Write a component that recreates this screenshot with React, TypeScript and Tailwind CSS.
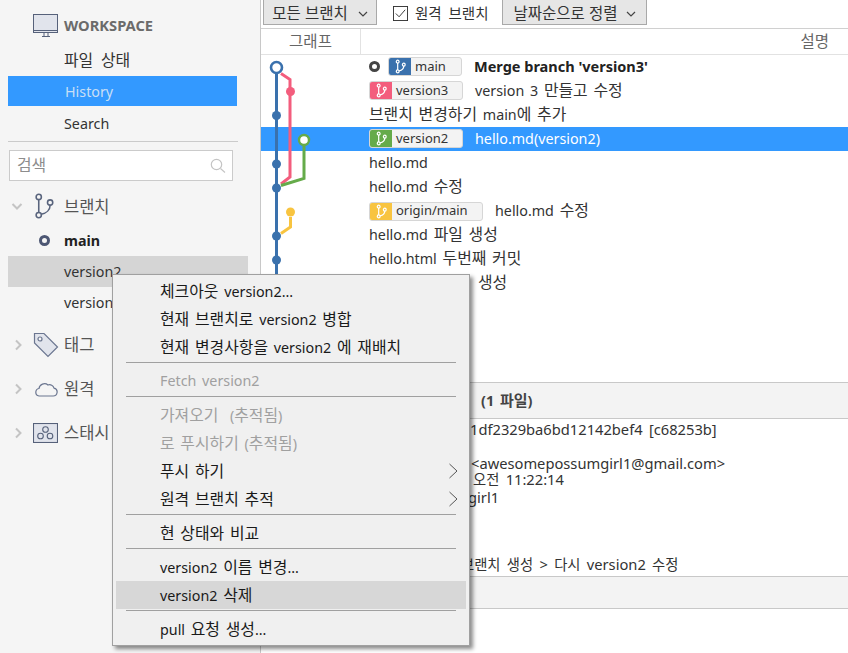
import React from 'react';

const FONT = "font-['Noto_Sans','Noto_Sans_CJK_KR',sans-serif]";

// Hangul runs are set a little larger, the UI font has wider Korean glyphs than Noto
const K = ({ children, size = 'text-[15.9px]' }: { children: string; size?: string }) => (
  <span>
    {children.split(/([\uAC00-\uD7A3]+)/).map((part, idx) =>
      idx % 2 === 1 ? (
        <span key={idx} className={size}>{part}</span>
      ) : (
        <React.Fragment key={idx}>{part}</React.Fragment>
      )
    )}
  </span>
);

const BranchGlyph = ({ className = '', strokeWidth = 1.3 }: { className?: string; strokeWidth?: number }) => (
  <svg viewBox="0 0 16 16" className={className} fill="none" stroke="currentColor" strokeWidth={strokeWidth}>
    <circle cx="5" cy="2.8" r="1.5" />
    <circle cx="5" cy="13.2" r="1.5" />
    <circle cx="11.5" cy="6" r="1.5" />
    <path d="M5 4.3v7.4M6.4 12.7c3-.6 5.1-2.6 5.1-5.2" />
  </svg>
);

const BranchTag = ({ name, color, width }: { name: string; color: string; width: string }) => (
  <span className={`flex h-[19px] items-center overflow-hidden rounded-[3px] border border-[#d6d6d6] bg-[#f3f3f3] ${width}`}>
    <span className={`flex h-full w-[22px] shrink-0 items-center justify-center text-white ${color}`}>
      <BranchGlyph className="h-[15px] w-[15px]" />
    </span>
    <span className="pl-[4px] text-[13px] text-[#333] [word-spacing:0]">{name}</span>
  </span>
);

const CommitGraph = () => (
  <svg className="absolute left-0 top-0 z-10" width="120" height="260" viewBox="261 54 120 260" fill="none">
    <path d="M276.5 72V290" stroke="#3a71ad" strokeWidth="3" />
    <path d="M281 72.5L290 78.5V176L281 183" stroke="#f35d7d" strokeWidth="3" />
    <path d="M304 145V177.5L281 184.5" stroke="#65ab4a" strokeWidth="3" />
    <path d="M290.5 216V226L281 232.5" stroke="#f8c440" strokeWidth="3" />
    <circle cx="276.5" cy="66.5" r="5.5" fill="#fff" stroke="#3a71ad" strokeWidth="2.6" />
    <circle cx="290.5" cy="90.5" r="4.5" fill="#f35d7d" />
    <circle cx="276.5" cy="114.5" r="4.5" fill="#3a71ad" />
    <circle cx="304" cy="139" r="5" fill="#fff" stroke="#65ab4a" strokeWidth="2.4" />
    <circle cx="276.5" cy="163" r="4.5" fill="#3a71ad" />
    <circle cx="276.5" cy="187" r="4.5" fill="#3a71ad" />
    <circle cx="290.5" cy="211" r="4.5" fill="#f8c440" />
    <circle cx="276.5" cy="235" r="4.5" fill="#3a71ad" />
    <circle cx="276.5" cy="259" r="4.5" fill="#3a71ad" />
  </svg>
);

const Row = ({ children, selected = false }: { children: React.ReactNode; selected?: boolean }) => (
  <div className={`flex h-[24.1px] items-center pb-[1px] pl-[108px] text-[14.3px] ${selected ? 'bg-[#3399ff] text-white' : 'text-[#333]'}`}>
    {children}
  </div>
);

const Chevron = ({ open = false }: { open?: boolean }) => (
  <svg viewBox="0 0 12 12" className="h-3 w-3" fill="none" stroke="#c4c4c4" strokeWidth="2">
    <path d={open ? 'M1.5 4l4.5 4.5L10.5 4' : 'M4 1.5L8.5 6 4 10.5'} />
  </svg>
);

const Sidebar = () => (
  <aside className="flex w-[261px] shrink-0 flex-col border-r border-[#c8c8c8] bg-[#f5f5f5] pl-2 text-[14.3px] text-[#333]">
    <div className="flex h-[46px] items-center pt-[4px] pl-[25px]">
      <svg viewBox="0 0 26 23" className="h-[23px] w-[26px]" fill="none">
        <rect x="0.5" y="0.5" width="24" height="18" fill="#e1e4ec" stroke="#56617a" />
        <path d="M0 16.5h25M9 22.5h8M11 19v3M15 19v3" stroke="#56617a" />
      </svg>
      <span className="ml-[5px] text-[14.7px] font-bold text-[#6b6b6b]">WORKSPACE</span>
    </div>
    <div className="flex h-[30px] items-center pl-[56px] [word-spacing:4px]"><K>파일 상태</K></div>
    <div className="flex h-[30px] w-[229px] items-center bg-[#3399ff] pl-[57px] pt-[2px] text-[#c9dff5]">History</div>
    <div className="flex h-[33px] items-center pl-[56px] pt-[2px]">Search</div>
    <div className="mt-[2px] h-px w-[230px] bg-[#cbcbcb]" />
    <div className="ml-px mt-[8px] flex h-[31px] w-[224px] items-center justify-between border border-[#cbcbcb] bg-white pl-[7px] pr-[6px] text-[#8d8d8d]">
      <K>검색</K>
      <svg viewBox="0 0 16 16" className="h-4 w-4" fill="none" stroke="#c4c4c4" strokeWidth="1.2">
        <circle cx="6.5" cy="6.5" r="5.2" />
        <path d="M10.5 10.5l4.5 4" />
      </svg>
    </div>
    <div className="mt-[8px] flex h-[34px] items-center pl-[3px]">
      <Chevron open />
      <BranchGlyph className="ml-[7px] h-[28px] w-[28px] text-[#59647d]" strokeWidth={0.9} />
      <span className="ml-[1px] pl-[5px] pt-[2px] text-[16.5px] text-[#555]">브랜치</span>
    </div>
    <div className="mt-[2px] flex h-[31px] items-center pl-[31px]">
      <span className="h-[11px] w-[11px] rounded-full border-[3px] border-[#4c5673]" />
      <span className="ml-[14px] font-bold text-[#222]">main</span>
    </div>
    <div className="flex h-[31px] w-[240px] items-center bg-[#d5d5d5] pl-[56px]">version2</div>
    <div className="flex h-[31px] items-center pl-[56px]">version3</div>
    <div className="mt-[5px] flex h-[44px] items-center pl-[4px]">
      <Chevron />
      <svg viewBox="0 0 26 26" className="ml-[9px] h-[26px] w-[26px]" fill="#e1e4ec" stroke="#6b7690" strokeWidth="1.2">
        <path d="M1.5 1.5h9.5L24.5 15 15 24.5 1.5 11z" />
        <circle cx="7" cy="7" r="2" fill="#f5f5f5" />
      </svg>
      <span className="ml-[5px] text-[16.5px] text-[#555]">태그</span>
    </div>
    <div className="flex h-[44px] items-center pl-[4px]">
      <Chevron />
      <svg viewBox="0 0 24 16" className="ml-[10px] h-[16px] w-[24px]" fill="none" stroke="#6b7690" strokeWidth="1.2">
        <path d="M5 15h14a4 4 0 0 0 1-7.9A4.6 4.6 0 0 0 14 4 5.5 5.5 0 0 0 5 7.5 3.8 3.8 0 0 0 5 15z" />
      </svg>
      <span className="ml-[6px] text-[16.5px] text-[#555]">원격</span>
    </div>
    <div className="flex h-[44px] items-center pl-[4px]">
      <Chevron />
      <svg viewBox="0 0 25 20" className="ml-[9px] h-[20px] w-[25px]" fill="#e1e4ec" stroke="#56617a" strokeWidth="1.1">
        <rect x="0.5" y="0.5" width="24" height="19" />
        <circle cx="12.5" cy="6.5" r="2.8" fill="none" />
        <circle cx="7.5" cy="13" r="2.8" fill="none" />
        <circle cx="17" cy="13" r="2.8" fill="none" />
      </svg>
      <span className="ml-[6px] text-[16.5px] text-[#555]">스태시</span>
    </div>
  </aside>
);

const Toolbar = () => (
  <div className="flex h-[29px] items-start border-b border-[#d0d0d0] pl-[2px] text-[15.5px] text-[#333] [word-spacing:3px]">
    <button className="flex h-[26px] w-[114px] -translate-y-px items-center justify-center gap-[10px] border border-[#a9a9a9] bg-[#e6e6e6] pt-[3px]">
      모든 브랜치
      <svg viewBox="0 0 10 6" className="h-[6px] w-[10px]" fill="none" stroke="#444" strokeWidth="1.2"><path d="M1 1l4 4 4-4" /></svg>
    </button>
    <svg viewBox="0 0 16 16" className="ml-[16px] mt-[6px] h-[15px] w-[15px]" fill="#fff" stroke="#333">
      <rect x="0.5" y="0.5" width="15" height="15" />
      <path d="M3 8l3.5 3.5L13 4" fill="none" />
    </svg>
    <span className="ml-[7px] mt-[3px] text-[14.5px]">원격 브랜치</span>
    <button className="ml-[14px] flex h-[26px] w-[145px] -translate-y-px items-center justify-center gap-[9px] border border-[#a9a9a9] bg-[#e6e6e6] pt-[3px]">
      날짜순으로 정렬
      <svg viewBox="0 0 10 6" className="h-[6px] w-[10px]" fill="none" stroke="#444" strokeWidth="1.2"><path d="M1 1l4 4 4-4" /></svg>
    </button>
  </div>
);

const CommitList = () => (
  <div className="relative h-[327px] overflow-hidden bg-white [word-spacing:2px]">
    <CommitGraph />
    <div>
      <Row>
        <span className="h-[11px] w-[11px] rounded-full border-[3px] border-[#444]" />
        <span className="ml-[8px]"><BranchTag name="main" color="bg-[#3a71ad]" width="w-[74px]" /></span>
        <span className="ml-[12px] text-[14.5px] font-bold text-[#222] [word-spacing:0]">Merge branch &apos;version3&apos;</span>
      </Row>
      <Row>
        <BranchTag name="version3" color="bg-[#f35d7d]" width="w-[94px]" />
        <span className="ml-[12px]"><K>version 3 만들고 수정</K></span>
      </Row>
      <Row><K>브랜치 변경하기 main에 추가</K></Row>
      <Row selected>
        <BranchTag name="version2" color="bg-[#65ab4a]" width="w-[94px]" />
        <span className="ml-[12px]">hello.md(version2)</span>
      </Row>
      <Row>hello.md</Row>
      <Row><K>hello.md 수정</K></Row>
      <Row>
        <BranchTag name="origin/main" color="bg-[#f8c440]" width="w-[114px]" />
        <span className="ml-[12px]"><K>hello.md 수정</K></span>
      </Row>
      <Row><K>hello.md 파일 생성</K></Row>
      <Row><K>hello.html 두번째 커밋</K></Row>
      <Row><span className="ml-[109px]"><K>생성</K></span></Row>
    </div>
  </div>
);

const Details = () => (
  <div className="flex flex-1 flex-col">
    <div className="flex h-[37px] items-center border-y border-[#c8c8c8] bg-[#f3f3f3]">
      <span className="ml-[220px] text-[14.5px] font-bold text-[#444] [word-spacing:2px]"><K size="text-[15px]">(1 파일)</K></span>
    </div>
    <div className="h-[157px] overflow-hidden bg-white pl-[209px] pt-[2px] text-[14.7px] leading-[16.8px] text-[#333] [word-spacing:2.5px]">
      <div>1df2329ba6bd12142bef4 [c68253b]</div>
      <div className="h-[16.8px]" />
      <div className="pl-[1px]">&lt;awesomepossumgirl1@gmail.com&gt;</div>
      <div className="pl-[3px]"><K size="text-[14.3px]">오전 11:22:14</K></div>
      <div className="-ml-[2px]">girl1</div>
      <div className="-ml-[9px] mt-[50px]"><K size="text-[14.3px]">브랜치 생성 &gt; 다시 version2 수정</K></div>
    </div>
    <div className="h-[33px] border-y border-[#c8c8c8] bg-[#f3f3f3]" />
    <div className="flex-1 bg-white" />
  </div>
);

type MenuEntry = { label?: string; disabled?: boolean; active?: boolean; arrow?: boolean };

const MENU: MenuEntry[] = [
  { label: '체크아웃 version2...' },
  { label: '현재 브랜치로 version2 병합' },
  { label: '현재 변경사항을 version2 에 재배치' },
  {},
  { label: 'Fetch version2', disabled: true },
  {},
  { label: '가져오기  (추적됨)', disabled: true },
  { label: '로 푸시하기 (추적됨)', disabled: true },
  { label: '푸시 하기', arrow: true },
  { label: '원격 브랜치 추적', arrow: true },
  {},
  { label: '현 상태와 비교' },
  {},
  { label: 'version2 이름 변경...' },
  { label: 'version2 삭제', active: true },
  {},
  { label: 'pull 요청 생성...' },
];

const ContextMenu = () => (
  <div className="absolute left-[112px] top-[274px] z-20 w-[358px] border border-[#a0a0a0] bg-[#f0f0f0] px-[3px] py-[2px] text-[14.3px] [word-spacing:2px] shadow-[3px_3px_4px_rgba(0,0,0,0.45)]">
    {MENU.map((item, idx) =>
      item.label ? (
        <div
          key={idx}
          className={`relative h-[28px] whitespace-pre pl-[44px] pt-[1px] leading-[26px] ${item.active ? 'bg-[#d7d7d7]' : ''} ${item.disabled ? 'text-[#a0a0a0]' : 'text-[#1a1a1a]'}`}
        >
          <K>{item.label}</K>
          {item.arrow && (
            <svg viewBox="0 0 9 16" className="absolute right-[8px] top-[6px] h-4 w-[9px]" fill="none" stroke="#555">
              <path d="M.5 1l7.5 7-7.5 7" />
            </svg>
          )}
        </div>
      ) : (
        <div key={idx} className="h-[6px] px-[10px] pt-[1px]">
          <div className="h-px w-full bg-[#a0a0a0]" />
        </div>
      )
    )}
  </div>
);

export default function App() {
  return (
    <div className={`relative flex h-[653px] w-[848px] overflow-hidden bg-white ${FONT}`}>
      <Sidebar />
      <main className="flex min-w-0 flex-1 flex-col">
        <Toolbar />
        <div className="flex h-[26px] items-center border-b border-[#e2e2e2] text-[15.5px] text-[#666]">
          <div className="flex h-full w-[100px] items-center justify-center border-r border-[#e2e2e2]">그래프</div>
          <div className="flex-1 pr-[19px] text-right">설명</div>
        </div>
        <CommitList />
        <Details />
      </main>
      <ContextMenu />
    </div>
  );
}
